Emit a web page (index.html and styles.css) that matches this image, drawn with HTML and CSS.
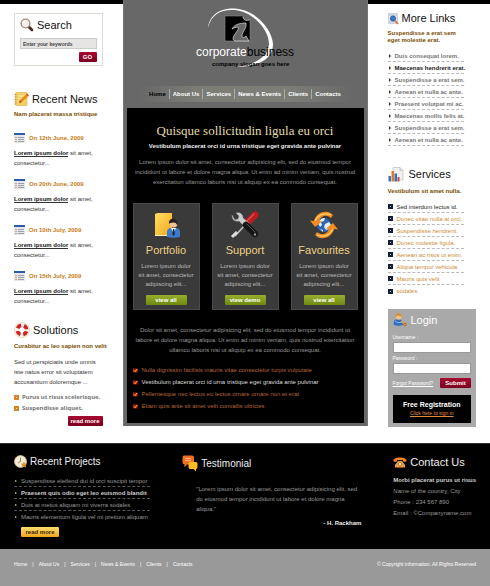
FILE: index.html
```html
<!DOCTYPE html>
<html lang="en">
<head>
<meta charset="utf-8">
<meta name="viewport" content="width=device-width, initial-scale=1">
<title>Corporate Business</title>
<link rel="stylesheet" href="styles.css">
</head>
<body>
<div class="page">
  <aside class="side side-left">
    <form class="search">
      <h2 class="heading"><svg width="14" height="14" viewBox="0 0 14 14"><path d="M8 8l4 4" stroke="#4a2a22" stroke-width="2.6" stroke-linecap="round"/><circle cx="5.500" cy="5.500" r="4.400" fill="#f0f0f2" stroke="#b08a78" stroke-width="1.400"/><path d="M3 5a3 3 0 0 1 3-2" stroke="#fff" stroke-width="1.200" fill="none"/></svg><label for="keywords">Search</label></h2>
      <input class="keywords" id="keywords" type="text" value="Enter your keywords">
      <button class="btn btn-red btn-go" type="submit">GO</button>
    </form>

    <section class="news">
      <h2 class="heading"><svg width="15" height="14" viewBox="0 0 15 14"><rect x="1.500" y=".5" width="11.500" height="13" rx="1" fill="#f5cf63" stroke="#e0ae3c" stroke-width=".6"/><path d="M4 4h7M4 6.500h6M4 9h5" stroke="#fff0b5"/><path d="M.5 2.500h2M.5 5h2M.5 7.500h2M.5 10h2M.5 12h2" stroke="#8d7b4a" stroke-width=".6"/><path d="M5 11l1-3 6-5.500 2 2-6 5.500z" fill="#f08a1d"/><path d="M12 2.500l1-1 2 2-1 1z" fill="#d8452c"/><path d="M5 11l1-3 2 2z" fill="#a5521a"/></svg>Recent News</h2>
      <p class="sub">Nam placerat massa tristique</p>
      <article class="news-item">
        <h3 class="date"><svg width="11" height="10" viewBox="0 0 11 10"><rect width="11" height="10" fill="#e4e7ee"/><rect width="11" height="2" fill="#2c5cab"/><path d="M4 4.500h6M4 6.500h6M4 8.500h6" stroke="#8a8f9b" stroke-width=".8"/><path d="M1 4.500h2M1 6.500h2M1 8.500h2" stroke="#d6a06a"/></svg>On 12th June, 2009</h3>
        <p><a href="#">Lorem ipsum dolor</a> sit amet, consectetur...</p>
      </article>
      <article class="news-item">
        <h3 class="date"><svg width="11" height="10" viewBox="0 0 11 10"><rect width="11" height="10" fill="#e4e7ee"/><rect width="11" height="2" fill="#2c5cab"/><path d="M4 4.500h6M4 6.500h6M4 8.500h6" stroke="#8a8f9b" stroke-width=".8"/><path d="M1 4.500h2M1 6.500h2M1 8.500h2" stroke="#d6a06a"/></svg>On 20th June, 2009</h3>
        <p><a href="#">Lorem ipsum dolor</a> sit amet, consectetur...</p>
      </article>
      <article class="news-item">
        <h3 class="date"><svg width="11" height="10" viewBox="0 0 11 10"><rect width="11" height="10" fill="#e4e7ee"/><rect width="11" height="2" fill="#2c5cab"/><path d="M4 4.500h6M4 6.500h6M4 8.500h6" stroke="#8a8f9b" stroke-width=".8"/><path d="M1 4.500h2M1 6.500h2M1 8.500h2" stroke="#d6a06a"/></svg>On 10th July, 2009</h3>
        <p><a href="#">Lorem ipsum dolor</a> sit amet, consectetur...</p>
      </article>
      <article class="news-item">
        <h3 class="date"><svg width="11" height="10" viewBox="0 0 11 10"><rect width="11" height="10" fill="#e4e7ee"/><rect width="11" height="2" fill="#2c5cab"/><path d="M4 4.500h6M4 6.500h6M4 8.500h6" stroke="#8a8f9b" stroke-width=".8"/><path d="M1 4.500h2M1 6.500h2M1 8.500h2" stroke="#d6a06a"/></svg>On 15th July, 2009</h3>
        <p><a href="#">Lorem ipsum dolor</a> sit amet, consectetur...</p>
      </article>
    </section>

    <section class="solutions">
      <h2 class="heading"><svg width="16" height="16" viewBox="0 0 16 16"><circle cx="8" cy="8" r="7.500" fill="none" stroke="#e9cfa6" stroke-width=".8"/><circle cx="8" cy="8" r="4.700" fill="none" stroke="#f6eeea" stroke-width="3.600"/><circle cx="8" cy="8" r="4.700" fill="none" stroke="#d32222" stroke-width="3.800" stroke-dasharray="4.400 2.983" stroke-dashoffset="-1.500"/></svg>Solutions</h2>
      <p class="sub">Curabitur ac leo sapien non velit</p>
      <p class="solutions-text">Sed ut perspiciatis unde omnis iste natus error sit voluptatem accusantium doloremque ...</p>
      <ul class="solution-list">
        <li>Purus ut risus scelerisque.</li>
        <li>Suspendisse aliquet.</li>
      </ul>
      <a class="btn btn-red btn-more" href="#">read more</a>
    </section>
  </aside>

  <main class="center">
    <header>
      <svg class="logo" width="110" height="66" viewBox="0 0 110 66">
        <rect x="35" y="12" width="25" height="25" fill="#000" stroke="#888" stroke-width=".6"/>
        <path d="M52 11l1 3c1 3 5 3 8 1v-4z" fill="#686868"/>
        <path d="M53 13c1 4 4 4 7 2.500" fill="none" stroke="#ddd" stroke-width=".7"/>
        <path d="M42 25c2-4 7-6 14-6 1 5-4 9-4 13 0 2 2 2 4 0l3 5H45c-3-1-2-4 0-7s4-5 3-7c-2 0-4 1-6 2z" fill="#686868" stroke="#ddd" stroke-width=".7"/>
        <path d="M18 24C20 8 34 4 44 4.500 64 5 82 24 83 40 83 54 70 63 47 62.500 66 61 78 52 79 40 79 25 62 7 44 6 32 5 21 10 18 24z" fill="#fff"/>
        <text class="logo-name" x="6" y="52"><tspan fill="#fff">corporate</tspan><tspan fill="#000">business</tspan></text>
        <text class="logo-slogan" x="22" y="62">company slogan goes here</text>
      </svg>
      <nav class="nav">
        <a class="current" href="#">Home</a>
        <a href="#">About Us</a>
        <a href="#">Services</a>
        <a href="#">News &amp; Events</a>
        <a href="#">Clients</a>
        <a href="#">Contacts</a>
      </nav>
    </header>

    <div class="panel">
      <h1>Quisque sollicitudin ligula eu orci</h1>
      <p class="lead">Vestibulum placerat orci id urna tristique eget gravida ante pulvinar</p>
      <p class="intro">Lorem ipsum dolor sit amet, consectetur adipisicing elit, sed do eiusmod tempor incididunt ut labore et dolore magna aliqua. Ut enim ad minim veniam, quis nostrud exercitation ullamco laboris nisi ut aliquip ex ea commodo consequat.</p>

      <div class="cards">
        <section class="card">
          <svg width="28" height="28" viewBox="0 0 28 28"><defs><linearGradient id="book" x1="0" x2="1" y2="1"><stop offset="0" stop-color="#ffdf62"/><stop offset="1" stop-color="#f3a51c"/></linearGradient></defs><path d="M3 3l2-1v21l-2 1z" fill="#c87b10"/><path d="M3 3l3-1h14v21l-1 2H3z" fill="url(#book)"/><path d="M3 24.500h16" stroke="#fff0c0"/><path d="M15 26v-5c0-3 2-4 4-4h4c3 0 5 1 5 4v5c-4 1-9 1-13 0z" fill="#3b7ccb"/><path d="M19 17l2.500 5 2.500-5z" fill="#fff"/><path d="M21 18h1.300l.5 5-1.200 2-1.200-2z" fill="#17233f"/><circle cx="21.500" cy="12.500" r="4" fill="#f0c297"/><path d="M17 13c-1-7 9-7 9 0l-1 1c-1-3-3-3-7-2z" fill="#2c211c"/></svg>
          <h2>Portfolio</h2>
          <p>Lorem ipsum dolor sit amet, consectetur adipiscing elit...</p>
          <a class="btn btn-green" href="#">view all</a>
        </section>
        <section class="card">
          <svg width="30" height="28" viewBox="0 0 30 28"><path d="M15 14L5 25" stroke="#b9bdc2" stroke-width="1.800"/><path d="M2 26l5-5" stroke="#d9dcdf" stroke-width="3"/><path d="M17 12l8-8" stroke="#b91c20" stroke-width="7" stroke-linecap="round"/><path d="M17 10l7-7" stroke="#e3514b" stroke-width="1.200" stroke-linecap="round"/><path d="M2 4c0 4 2 7 7 6l6 6 4-4-6-5c0-4-3-6-7-5l3 3-1 3-3 1z" fill="#c9ccd0" stroke="#999" stroke-width=".4"/><path d="M16 14l9 9" stroke="#151515" stroke-width="6.500" stroke-linecap="round"/><path d="M17 13l8 8" stroke="#555" stroke-width="1" stroke-linecap="round"/><circle cx="25" cy="23.500" r="1.200" fill="#999"/></svg>
          <h2>Support</h2>
          <p>Lorem ipsum dolor sit amet, consectetur adipiscing elit...</p>
          <a class="btn btn-green" href="#">view demo</a>
        </section>
        <section class="card">
          <svg width="30" height="28" viewBox="0 0 30 28"><circle cx="15" cy="14" r="7" fill="#2d64b3"/><path d="M9 12c2-4 4-5 7-5l-1 3-3 1 1 3-2 2zM16 13l4-2 2 3-2 4-3 1-2-3zM11 18l3 1v2z" fill="#e3eefa"/><path d="M5 10C7 3 13 0 19 1c2 .5 4 2 5 3l-2 3c-5-4-10-2-12 3l3 .5L6 16 1 9.500z" fill="#f58b1e"/><path d="M25 18c-2 7-8 10-14 9-2-.5-4-2-5-3l2-3c5 4 10 2 12-3l-3-.5 7-5.500 5 6.500z" fill="#f58b1e"/><path d="M6 10c3-6 9-9 16-6" stroke="#ffd36b" stroke-width="1.200" fill="none"/><path d="M24 18c-3 6-9 9-16 6" stroke="#ffd36b" stroke-width="1.200" fill="none"/></svg>
          <h2>Favourites</h2>
          <p>Lorem ipsum dolor sit amet, consectetur adipiscing elit...</p>
          <a class="btn btn-green" href="#">view all</a>
        </section>
      </div>

      <p class="outro">Dolor sit amet, consectetur adipisicing elit, sed do eiusmod tempor incididunt ut labore et dolore magna aliqua. Ut enim ad minim veniam, quis nostrud exercitation ullamco laboris nisi ut aliquip ex ea commodo consequat.</p>
      <ul class="checks">
        <li><svg width="5" height="5" viewBox="0 0 5 5"><rect y=".5" width="4.500" height="4" fill="#b5150f"/><path d="M1 2.500l1 1.200L4.300 1" fill="none" stroke="#ffc64a"/></svg>Nulla dignissim facilisis mauris vitae consectetur turpis vulputate</li>
        <li class="bright"><svg width="5" height="5" viewBox="0 0 5 5"><rect y=".5" width="4.500" height="4" fill="#b5150f"/><path d="M1 2.500l1 1.200L4.300 1" fill="none" stroke="#ffc64a"/></svg>Vestibulum placerat orci id urna tristique eget gravida ante pulvinar</li>
        <li><svg width="5" height="5" viewBox="0 0 5 5"><rect y=".5" width="4.500" height="4" fill="#b5150f"/><path d="M1 2.500l1 1.200L4.300 1" fill="none" stroke="#ffc64a"/></svg>Pellentesque nec lectus eu lectus ornare ornare non et erat</li>
        <li><svg width="5" height="5" viewBox="0 0 5 5"><rect y=".5" width="4.500" height="4" fill="#b5150f"/><path d="M1 2.500l1 1.200L4.300 1" fill="none" stroke="#ffc64a"/></svg>Etiam quis ante sit amet velit convallis ultricies</li>
      </ul>
    </div>
  </main>

  <aside class="side side-right">
    <section class="links">
      <h2 class="heading"><svg width="11" height="12" viewBox="0 0 11 12"><rect x=".5" y=".5" width="9" height="10" fill="#dfe5f0" stroke="#b9c1d0" stroke-width=".6"/><path d="M1 2h8M1 9h6" stroke="#aebbd2" stroke-width=".8"/><circle cx="5" cy="5.500" r="2.600" fill="#3c78c8" stroke="#27508f" stroke-width=".8"/><path d="M7 7.500l3 3.500" stroke="#d87b2c" stroke-width="1.800"/></svg>More Links</h2>
      <p class="sub">Suspendisse a erat sem eget molestie erat.</p>
      <ul class="link-list">
        <li><a href="#">Duis consequat lorem.</a></li>
        <li class="active"><a href="#">Maecenas hendrerit erat.</a></li>
        <li><a href="#">Suspendisse a erat sem.</a></li>
        <li><a href="#">Aenean et nulla ac ante.</a></li>
        <li><a href="#">Praesent volutpat mi ac.</a></li>
        <li><a href="#">Maecenas mollis felis at.</a></li>
        <li><a href="#">Suspendisse a erat sem.</a></li>
        <li><a href="#">Aenean et nulla ac ante.</a></li>
      </ul>
    </section>

    <section class="services">
      <h2 class="heading"><svg width="16" height="15" viewBox="0 0 16 15"><path d="M5 .5h7l3 3V13H5z" fill="#f0f0f0" stroke="#b5b5b5" stroke-width=".6"/><path d="M12 .5v3h3" fill="#ddd" stroke="#b5b5b5" stroke-width=".6"/><path d="M.5 9h2.500v5.500H.5z" fill="#3c6fb8"/><path d="M3.500 4h2.500v10.500H3.500z" fill="#dd7b28"/><path d="M6.500 6.500H9v8H6.500z" fill="#3c6fb8"/><path d="M9.500 10h2v4.500h-2z" fill="#c8463a"/></svg>Services</h2>
      <p class="sub">Vestibulum sit amet nulla.</p>
      <ul class="service-list">
        <li class="active"><a href="#">Sed interdum lectus id.</a></li>
        <li><a href="#">Donec vitae nulla at orci.</a></li>
        <li><a href="#">Suspendisse hendrerit.</a></li>
        <li><a href="#">Donec molestie ligula.</a></li>
        <li><a href="#">Aenean ac risus ut enim.</a></li>
        <li><a href="#">Aliqua tempor vehicula.</a></li>
        <li><a href="#">Mauris quis velit</a></li>
        <li><a href="#">sodales.</a></li>
      </ul>
    </section>

    <form class="login">
      <h2 class="heading"><svg width="14" height="14" viewBox="0 0 14 14"><path d="M1 12c-1-4 1-6 4-6s5 2 5 6c-3 1-6 1-9 0z" fill="#2c6fc4"/><path d="M2 8c2 2 4 2 7 1" stroke="#8fc0f0" stroke-width="1" fill="none"/><circle cx="5.500" cy="4" r="2.800" fill="#f3c08a"/><path d="M2.500 4c0-5 6-5 6 0-2-2-4-2-6 0z" fill="#e08a1c"/><path d="M8 8l4 3.500" stroke="#e9a33b" stroke-width="1.500"/><circle cx="12" cy="11.500" r="1.300" fill="none" stroke="#b56b12"/></svg>Login</h2>
      <label for="user">Username :</label>
      <input id="user" type="text">
      <label for="pass">Password :</label>
      <input id="pass" type="password">
      <div class="login-row"><a href="#">Forgot Password?</a><button class="btn btn-red btn-submit" type="submit">Submit</button></div>
      <div class="register"><strong>Free Registration</strong><a href="#">Click here to sign in</a></div>
    </form>
  </aside>
</div>

<footer>
  <div class="foot-main">
    <section>
      <h2 class="heading heading-foot"><svg width="13" height="14" viewBox="0 0 13 14"><circle cx="6.500" cy="6.500" r="6" fill="#f6ead2" stroke="#d9b98a" stroke-width=".8"/><path d="M6.500 2.500v4L4 8" stroke="#8a7a62" stroke-width=".9" fill="none"/><path d="M10 6.500l1 2 2 .3-1.300 1.500.3 2.200-2-1-2 1 .3-2.200L7 8.800l2-.3z" fill="#d8912e"/></svg>Recent Projects</h2>
      <ul class="project-list">
        <li>Suspendisse eleifend dui id orci suscipit tempor</li>
        <li class="active">Praesent quis odio eget leo euismod blandit</li>
        <li>Duis at metus aliquam mi viverra sodales</li>
        <li>Mauris elementum ligula vel mi pretium aliquam</li>
      </ul>
      <a class="btn btn-gold" href="#">read more</a>
    </section>
    <section>
      <h2 class="heading heading-foot"><svg width="16" height="17" viewBox="0 0 16 17"><path d="M2 .5h8q2 0 2 2v5q0 2-2 2H5l-2.500 3V9.500Q.5 9 .5 7.500v-5q0-2 1.500-2z" fill="#ef6f25"/><path d="M3 3.500h6M3 5.500h6" stroke="#ffb27a"/><path d="M8 7h6q1.500 0 1.500 2v3q0 1.500-1.500 2v2.500L11.500 14H8q-1.500 0-1.500-2V9Q6.500 7 8 7z" fill="#fdbb23"/></svg>Testimonial</h2>
      <blockquote>
        <p>"Lorem ipsum dolor sit amet, consectetur adipisicing elit, sed do eiusmod tempor incididunt ut labore et dolore magna aliqua."</p>
        <cite>- H. Rackham</cite>
      </blockquote>
    </section>
    <section>
      <h2 class="heading heading-contact"><svg width="14" height="11" viewBox="0 0 14 11"><path d="M.5 4.500C0 1.500 3 .5 7 .5s7 1 6.500 4l-3 .5-.5-2H4l-.5 2z" fill="#f58220"/><path d="M5 4h4l3 4v2.500H2V8z" fill="#f79a3a"/><circle cx="7" cy="7" r="1.700" fill="#fff" stroke="#c25a0c" stroke-width=".7"/></svg>Contact Us</h2>
      <address>
        <strong>Morbi placerat purus ut risus</strong>
        <span>Name of the country, City</span>
        <span>Phone : 234 567 890</span>
        <span>Email : ©Companyname.com</span>
      </address>
    </section>
  </div>
  <div class="foot-bar">
    <nav class="foot-nav"><a href="#">Home</a><a href="#">About Us</a><a href="#">Services</a><a href="#">News &amp; Events</a><a href="#">Clients</a><a href="#">Contacts</a></nav>
    <p>© Copyright information. All Rights Reserved</p>
  </div>
</footer>
</body>
</html>
```
FILE: styles.css
```css
*, *::before { box-sizing: border-box; margin: 0; padding: 0; }

body {
  font: 6px/10px "Liberation Sans", Arial, sans-serif;
  color: #333;
  background: #fff;
}

ul { list-style: none; }
a { color: inherit; text-decoration: none; }
svg { display: block; flex: none; }
input, button { font: inherit; }

.page {
  display: grid;
  grid-template-columns: minmax(0, 1fr) minmax(0, 2fr) minmax(0, 1fr);
  align-items: start;
  padding-bottom: 16px;
}

.side { border-top: 4px solid #000; }
.side-left { padding: 9px 20px 0 14px; }
.side-right { padding: 8px 14px 0 20px; }

.heading {
  display: flex;
  align-items: center;
  gap: 3px;
  font-size: 11px;
  line-height: 14px;
  font-weight: 400;
  color: #111;
  white-space: nowrap;
}

.sub { font-weight: 700; color: #7a4b00; white-space: nowrap; }

.btn {
  display: block;
  width: fit-content;
  height: 10px;
  border: 0;
  border-radius: 1px;
  font-weight: 700;
  line-height: 10px;
  text-align: center;
  color: #fff;
}
.btn-red { background: linear-gradient(#a8092f, #7c001e); }

/* Search */
.search { border: 1px solid #dedbd2; padding: 4px 5px 3px; }
.search .btn-go { width: 18px; margin: 3px 0 0 auto; }
.keywords {
  display: block;
  width: 100%;
  height: 11px;
  margin-top: 6px;
  padding: 0 2px;
  border: 1px solid #ccc;
  background: #e7e4e4;
  color: #444;
  font-weight: 700;
  font-size: 5px;
}

/* News */
.news { margin-top: 26px; }
.news .sub { margin: 3px 0 14px; }
.news-item + .news-item { margin-top: 11px; }
.date {
  display: flex;
  align-items: center;
  gap: 4px;
  margin-bottom: 5px;
  font-size: 6px;
  color: #c97a14;
}
.news-item a { font-weight: 700; color: #111; border-bottom: 1px solid #333; }

/* Solutions */
.solutions { margin-top: 16px; }
.solutions .heading { line-height: 16px; }
.solutions .sub { margin-top: 3px; }
.solutions-text { margin-top: 6px; }
.solution-list {
  margin-top: 5px;
  font: 700 6px/11px "Noto Sans", sans-serif;
  color: #777;
}
.solution-list li { display: flex; align-items: center; gap: 3px; white-space: nowrap; }
.solution-list li::before {
  content: "";
  width: 5px;
  height: 5px;
  border: 2px solid #d9822b;
  background: #fff;
}
.btn-more { width: 35px; margin: 2px 0 0 auto; }

/* Centre column */
.center {
  border: solid #777;
  border-width: 0 1px;
  background: #686868;
  padding: 4px 3px 3px;
}
.logo { margin: 0 auto; overflow: visible; }
.logo-name { font: 12px "Liberation Sans", Arial, sans-serif; }
.logo-slogan { font: 700 6px "Liberation Sans", Arial, sans-serif; fill: #000; }

.nav {
  display: flex;
  justify-content: center;
  align-items: center;
  height: 16px;
  margin: 16px 12px 6px;
  background: linear-gradient(90deg, #686868, #7d7d78 30%, #7d7d78 70%, #686868);
  font-weight: 700;
  color: #fff;
  white-space: nowrap;
}
.nav a { padding: 0 3px; }
.nav a + a { border-left: 1px solid #aaa; }
.nav .current { color: #000; }

.panel { background: #000; padding: 15px 6px 11px; color: #999; text-align: center; }
.panel h1 {
  font: 13px/16px "Liberation Serif", Georgia, serif;
  color: #e2dba8;
}
.lead { margin-top: 2px; font-weight: 700; color: #eee; }
.intro { margin-top: 6px; }

.cards {
  display: grid;
  grid-template-columns: repeat(3, 1fr);
  gap: 12px;
  margin: 16px 0 15px;
}
.card {
  display: flex;
  flex-direction: column;
  align-items: center;
  border: 1px solid #4a4a4a;
  background: #3a3a3a;
  padding: 7px 4px 4px;
  line-height: 9px;
  color: #bbb;
}
.card h2 { margin: 5px 0 6px; font-size: 11px; line-height: 12px; font-weight: 400; color: #f0d184; }
.btn-green { width: 41px; margin-top: 6px; background: linear-gradient(#97ad2c, #6f8a10); }

.checks { margin-top: 9px; text-align: left; line-height: 12px; color: #b5653a; }
.checks li { display: flex; align-items: center; gap: 4px; white-space: nowrap; }
.checks .bright { color: #ddd; }

/* Right column */
.links .heading { line-height: 13px; }
.links .sub { margin: 5px 12px 0 0; line-height: 7px; white-space: normal; }
.link-list { margin: 6px 12px 0 0; font-weight: 700; color: #777; }
.link-list li, .service-list li {
  display: flex;
  align-items: center;
  height: 12px;
  border-bottom: 1px dashed #bbb;
  white-space: nowrap;
}
.link-list li::before {
  content: "";
  margin: 0 4px 0 1px;
  border: solid transparent;
  border-width: 2px 0 2px 2px;
  border-left-color: #333;
}
.link-list .active { color: #222; }

.services { margin-top: 21px; }
.services .heading { gap: 5px; line-height: 15px; }
.services .sub { margin-top: 4px; }
.service-list { margin: 5px 12px 0 0; color: #d08a35; }
.service-list li { gap: 4px; }
.service-list li:last-child { border-bottom: 0; }
.service-list li::before {
  content: "";
  width: 5px;
  height: 5px;
  border: 2px solid #14203a;
  background: #b9c4d8;
}
.service-list .active { color: #222; }

/* Login */
.login { margin-top: 12px; padding: 4px 5px; background: #a9a9a9; color: #fff; }
.login .heading { margin-bottom: 6px; gap: 4px; color: #fff; }
.login label { display: block; font-size: 5px; line-height: 8px; }
.login input {
  display: block;
  width: 100%;
  height: 11px;
  margin: 1px 0;
  padding: 0 2px;
  border: 1px solid #999;
  background: #fff;
}
.login-row { display: flex; justify-content: space-between; align-items: center; margin-top: 4px; white-space: nowrap; }
.login-row a { font-size: 5px; text-decoration: underline; }
.btn-submit { width: 31px; }
.register {
  display: flex;
  flex-direction: column;
  align-items: center;
  margin-top: 7px;
  padding: 5px 0;
  background: #000;
  line-height: 9px;
}
.register strong { font-size: 7px; }
.register a { font-size: 5px; color: #e08a3a; text-decoration: underline; }

/* Footer */
.foot-main {
  display: grid;
  grid-template-columns: 137fr 180fr 80fr;
  gap: 32px;
  padding: 11px 14px 12px;
  border-top: 1px solid #333;
  background: #000;
  color: #999;
}
.heading-foot { font-size: 10px; color: #eee; }
.heading-contact { color: #eee; }

.project-list { margin-top: 6px; }
.project-list li {
  display: flex;
  align-items: center;
  height: 12px;
  border-bottom: 1px dashed #555;
  white-space: nowrap;
}
.project-list li:last-child { border-bottom: 0; }
.project-list li::before {
  content: "";
  margin: 0 4px 0 1px;
  border: solid transparent;
  border-width: 1px 0 1px 2px;
  border-left-color: #e6c84a;
}
.project-list .active { font-weight: 700; color: #ccc; }
.btn-gold { width: 38px; margin: 4px 0 0 7px; background: linear-gradient(#ffdc6b, #eda71f); color: #3a2500; }

blockquote { padding: 12px 0 0 14px; }
cite { display: block; margin-top: 4px; font-style: normal; font-weight: 700; color: #eee; text-align: right; }

address { margin-top: 6px; font-style: normal; line-height: 11px; white-space: nowrap; }
address strong, address span { display: block; }
address strong { color: #ccc; }

.foot-bar {
  display: flex;
  justify-content: space-between;
  padding: 10px 14px 17px;
  background: #999;
  color: #fff;
  font-size: 5px;
  white-space: nowrap;
}
.foot-nav a + a::before { content: "|"; margin: 0 5px; }
```
